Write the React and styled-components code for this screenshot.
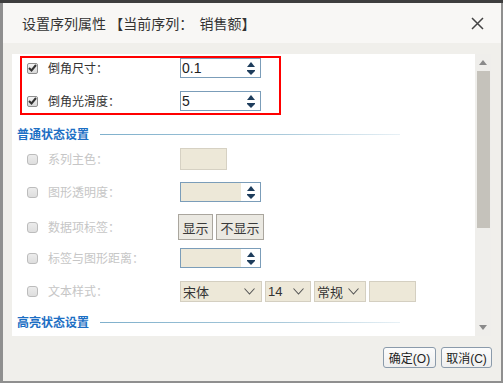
import React from "react";
import styled, { createGlobalStyle } from "styled-components";

const GlobalStyle = createGlobalStyle`
  html, body {
    margin: 0;
    padding: 0;
  }
  body {
    width: 503px;
    height: 383px;
    overflow: hidden;
    background: linear-gradient(#3e3e3e 0 3px, #8f8f8f 3px);
    font-family: "Noto Sans CJK SC", sans-serif;
  }
`;

const Frame = styled.div`
  box-sizing: border-box;
  height: 383px;
  padding: 3px 2px 2px 3px;
`;

const Dialog = styled.div`
  width: 498px;
  height: 378px;
  display: flex;
  flex-direction: column;
  background: #f0efeb;
`;

const Header = styled.div`
  height: 40px;
  flex: none;
  display: flex;
  align-items: center;
  justify-content: space-between;
  padding: 0 17px 0 19px;
  background: #f8f7f5;
  color: #333;
  font-size: 14px;
`;

const Title = styled.span`
  line-height: 20px;
  white-space: pre;
`;

const Body = styled.div`
  padding: 11px 10px 0 9px;
`;

const Panel = styled.div`
  display: flex;
  height: 282px;
`;

const Content = styled.div`
  flex: 1;
  background: #fff;
  overflow: hidden;
  padding: 2px 0 0 8px;
`;

const Highlight = styled.div`
  width: 257px;
  border: 2px solid #ff0000;
  display: flex;
  flex-direction: column;
  gap: 13px;
  padding: 0 0 2px 0;
`;

const Row = styled.div`
  display: grid;
  grid-template-columns: 11px 122px auto;
  column-gap: 10px;
  align-items: center;
  height: ${(p) => p.h || 22}px;
  padding-left: ${(p) => (p.inset ? 5 : 7)}px;
`;

const Label = styled.span`
  font-size: 12px;
  line-height: 16px;
  white-space: nowrap;
  color: ${(p) => (p.disabled ? "#c6c6c6" : "#333")};
`;

const Box = styled.span`
  box-sizing: border-box;
  width: 11px;
  height: 11px;
  display: flex;
  align-items: center;
  justify-content: center;
  border: 1px solid ${(p) => (p.checked ? "#8f8f8f" : "#bcbcbc")};
  border-radius: ${(p) => (p.checked ? 2 : 3)}px;
  background: ${(p) =>
    p.checked ? "linear-gradient(#f4f4f4, #d8d8d8)" : "linear-gradient(#ececec, #dedede)"};
`;

const Section = styled.div`
  display: flex;
  align-items: center;
  height: 18px;
  margin: ${(p) => p.mt}px 0 5px -3px;
`;

const SectionText = styled.span`
  width: 72px;
  margin-right: 11px;
  font-size: 12px;
  font-weight: 700;
  line-height: 18px;
  color: #1d6fc4;
  white-space: nowrap;
`;

const SectionLine = styled.span`
  width: 300px;
  height: 1px;
  background: linear-gradient(90deg, #7fb0cc, #a9c9da 60%, #e8f1f6);
`;

const List = styled.div`
  display: flex;
  flex-direction: column;
  gap: 11px;
`;

const Spin = styled.div`
  box-sizing: border-box;
  width: 81px;
  height: 20px;
  display: flex;
  border: 1px solid #7b9db9;
  background: #fff;
`;

const SpinText = styled.span`
  flex: 1;
  padding-left: 1px;
  background: ${(p) => (p.disabled ? "#ede8d8" : "#fff")};
  font-family: "Liberation Sans", sans-serif;
  font-size: 14px;
  line-height: 18px;
  color: #222;
`;

const SpinArrows = styled.span`
  width: 19px;
  display: flex;
  flex-direction: column;
  align-items: center;
  justify-content: center;
  gap: 3px;
`;

const Swatch = styled.span`
  box-sizing: border-box;
  width: 47px;
  height: 22px;
  background: #ede8d8;
  border: 1px solid #d6d1c3;
`;

const Group = styled.div`
  display: flex;
  gap: ${(p) => p.gap || 3}px;
  margin-left: ${(p) => p.ml || 0}px;
`;

const ToggleBtn = styled.span`
  box-sizing: border-box;
  width: ${(p) => p.w}px;
  height: 26px;
  display: flex;
  align-items: center;
  justify-content: center;
  background: #ebe9e2;
  border: 1px solid #aaa69e;
  font-size: 13px;
  color: #3a3a3a;
`;

const Select = styled.span`
  box-sizing: border-box;
  width: ${(p) => p.w}px;
  height: 21px;
  display: flex;
  align-items: center;
  justify-content: space-between;
  padding: 0 6px 0 2px;
  background: #ede8d8;
  border: 1px solid #d4cfc1;
  font-family: "Liberation Sans", "Noto Sans CJK SC", sans-serif;
  font-size: 13px;
  color: #333;
`;

const Scrollbar = styled.div`
  width: 16px;
  display: flex;
  flex-direction: column;
  align-items: center;
  background: #efeeeb;
`;

const ArrowCell = styled.span`
  height: 17px;
  display: flex;
  align-items: center;
  justify-content: center;
`;

const Thumb = styled.span`
  width: 13px;
  height: 157px;
  margin-left: 1px;
  background: #c5c2bb;
`;

const Spacer = styled.span`
  flex: 1;
`;

const Footer = styled.div`
  display: flex;
  justify-content: flex-end;
  gap: 5px;
  padding: 11px 9px 0 0;
`;

const FooterBtn = styled.span`
  box-sizing: border-box;
  width: ${(p) => p.w}px;
  height: 21px;
  display: flex;
  align-items: center;
  justify-content: center;
  border: 1px solid #8b9bab;
  border-radius: 3px;
  background: linear-gradient(#fcfcfc, #efefef);
  font-family: "Liberation Sans", "Noto Sans CJK SC", sans-serif;
  font-size: 12px;
  color: #222;
`;

function CheckBox({ checked }) {
  return (
    <Box checked={checked}>
      {checked && (
        <svg width="9" height="8" viewBox="0 0 9 8">
          <path d="M1 4 L3.5 6.5 L8 1" fill="none" stroke="#333" strokeWidth="2" />
        </svg>
      )}
    </Box>
  );
}

function SpinBox({ value, disabled }) {
  return (
    <Spin>
      <SpinText disabled={disabled}>{value}</SpinText>
      <SpinArrows>
        <svg width="8" height="5" viewBox="0 0 8 5">
          <path d="M0 5 L4 0 L8 5 Z" fill="#1e3d5c" />
        </svg>
        <svg width="8" height="5" viewBox="0 0 8 5">
          <path d="M0 0 L8 0 L8 1 L4 5 L0 1 Z" fill="#1e3d5c" />
        </svg>
      </SpinArrows>
    </Spin>
  );
}

function Chevron() {
  return (
    <svg width="11" height="7" viewBox="0 0 11 7">
      <path d="M0.5 0.5 L5.5 6 L10.5 0.5" fill="none" stroke="#555" strokeWidth="1.1" />
    </svg>
  );
}

function Tri({ down }) {
  return (
    <svg width="8" height="5" viewBox="0 0 8 5">
      <path d={down ? "M0 0 L8 0 L4 5 Z" : "M0 5 L4 0 L8 5 Z"} fill="#8a8a8a" />
    </svg>
  );
}

export default function App() {
  return (
    <>
      <GlobalStyle />
      <Frame>
        <Dialog>
          <Header>
            <Title>设置序列属性 【当前序列：  销售额】</Title>
            <svg width="13" height="13" viewBox="0 0 13 13">
              <path d="M1 1 L12 12 M12 1 L1 12" stroke="#444" strokeWidth="1.5" />
            </svg>
          </Header>
          <Body>
            <Panel>
              <Content>
                <Highlight>
                  <Row inset h={20}>
                    <CheckBox checked />
                    <Label>倒角尺寸：</Label>
                    <SpinBox value="0.1" />
                  </Row>
                  <Row inset h={20}>
                    <CheckBox checked />
                    <Label>倒角光滑度：</Label>
                    <SpinBox value="5" />
                  </Row>
                </Highlight>

                <Section mt={10}>
                  <SectionText>普通状态设置</SectionText>
                  <SectionLine />
                </Section>
                <List>
                  <Row>
                    <CheckBox />
                    <Label disabled>系列主色：</Label>
                    <Swatch />
                  </Row>
                  <Row>
                    <CheckBox />
                    <Label disabled>图形透明度：</Label>
                    <SpinBox disabled value="" />
                  </Row>
                  <Row>
                    <CheckBox />
                    <Label disabled>数据项标签：</Label>
                    <Group ml={-2}>
                      <ToggleBtn w={35}>显示</ToggleBtn>
                      <ToggleBtn w={48}>不显示</ToggleBtn>
                    </Group>
                  </Row>
                  <Row>
                    <CheckBox />
                    <Label disabled>标签与图形距离：</Label>
                    <SpinBox disabled value="" />
                  </Row>
                  <Row>
                    <CheckBox />
                    <Label disabled>文本样式：</Label>
                    <Group>
                      <Select w={82}>
                        宋体
                        <Chevron />
                      </Select>
                      <Select w={46}>
                        14
                        <Chevron />
                      </Select>
                      <Select w={52}>
                        常规
                        <Chevron />
                      </Select>
                      <Select w={47} />
                    </Group>
                  </Row>
                </List>
                <Section mt={11}>
                  <SectionText>高亮状态设置</SectionText>
                  <SectionLine />
                </Section>
              </Content>
              <Scrollbar>
                <ArrowCell>
                  <Tri />
                </ArrowCell>
                <Thumb />
                <Spacer />
                <ArrowCell>
                  <Tri down />
                </ArrowCell>
              </Scrollbar>
            </Panel>
          </Body>
          <Footer>
            <FooterBtn w={53}>确定(O)</FooterBtn>
            <FooterBtn w={51}>取消(C)</FooterBtn>
          </Footer>
        </Dialog>
      </Frame>
    </>
  );
}
